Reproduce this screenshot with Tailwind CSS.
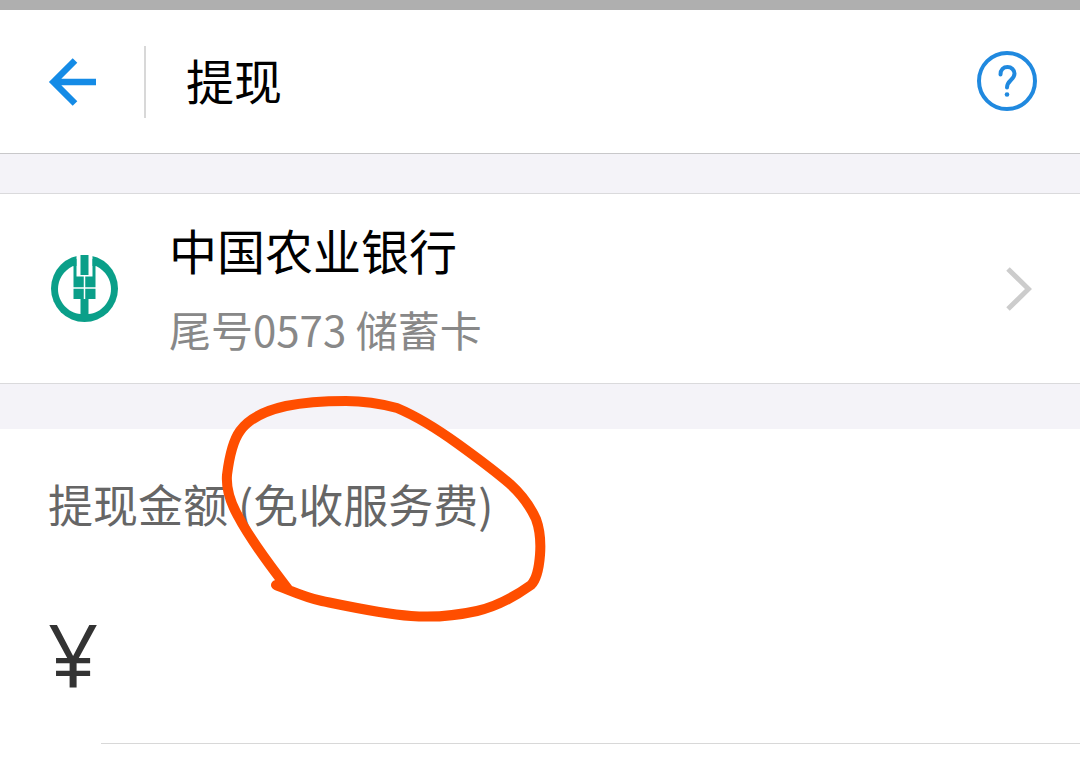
<!DOCTYPE html>
<html lang="zh-CN">
<head>
<meta charset="utf-8">
<meta name="viewport" content="width=device-width, initial-scale=1">
<title>提现</title>
<script src="https://cdn.jsdelivr.net/npm/@tailwindcss/browser@4"></script>
</head>
<body class="min-h-screen bg-white font-['Noto_Sans_CJK_SC',sans-serif] text-black">
<div class="h-[10px] bg-[#afafaf]"></div>
<header class="flex h-36 items-center border-b border-[#c8c8ca] pr-[42px] pl-12">
  <button type="button" aria-label="返回" class="flex">
    <svg class="h-12 w-12" viewBox="0 0 48 48" fill="none" stroke="#148be6" stroke-width="6.500"><path d="M48 24H5M27 2.500L5.500 24L27 45.500"/></svg>
  </button>
  <div class="ml-12 h-[72px] w-0.5 bg-[#d8d8d8]"></div>
  <h1 class="ml-10 flex-1 pb-1.5 text-[48px] leading-[64px]">提现</h1>
  <button type="button" aria-label="帮助" class="flex">
    <svg class="h-[62px] w-[62px]" viewBox="0 0 62 62" fill="none" stroke="#2089df" stroke-width="4" stroke-linecap="round"><circle cx="31" cy="30" r="28"/><path d="M24.500 23.500C24.500 18.500 27.500 16 31.500 16C35.500 16 38.500 19 38.500 22.500C38.500 29 31 29 31 36.500"/><circle cx="31" cy="43.500" r="2.300" fill="#2089df" stroke="none"/></svg>
  </button>
</header>
<main>
  <div class="bg-[#f4f3f8] pt-10">
    <a href="#" class="-mt-px flex h-[191px] items-center border-y border-[#dadadc] bg-white pr-12 pl-[51px]">
      <svg class="h-[67px] w-[67px]" viewBox="0 0 67 67" aria-hidden="true">
        <circle cx="33.500" cy="33.500" r="33.500" fill="#0a9f89"/>
        <path d="M22 11C12 16 7 25 7 34C7 47 17 58 29.500 59H37.500C50 58 60 47 60 34C60 25 55 16 45 11Z" fill="#fff"/>
        <path d="M25.500 -1H41.500V22H25.500Z" fill="#fff"/>
        <path d="M21.500 4H25.500V21.500H41.500V4H45.500L44.500 12V44H37.500V62H29.500V44H22.500V12ZM29.500 0H37.500V20H29.500Z" fill="#0a9f89"/>
        <path d="M33.500 21V44M22 33H45" fill="none" stroke="#fff" stroke-width="1.500"/>
      </svg>
      <span class="ml-[51px] flex flex-1 flex-col gap-3 pb-1">
        <span class="text-[48px] leading-[72px]">中国农业银行</span>
        <span class="text-[42px] leading-[64px] text-[#888]">尾号0573 储蓄卡</span>
      </span>
      <svg class="h-[44px] w-[26px]" viewBox="0 0 26 44" fill="none" stroke="#ccc" stroke-width="5" aria-hidden="true"><path d="M2 2L22.500 22L2 42"/></svg>
    </a>
    <div class="h-[45px]"></div>
  </div>
  <section class="pt-[43px]">
    <label for="amount" class="relative mx-12 block w-fit text-[45px] leading-[64px] text-[#666]">提现金额 (免收服务费)
      <svg class="pointer-events-none absolute -top-20 left-[168px] h-[232px] w-[336px]" viewBox="216 392 336 232" fill="none" stroke="#ff4e00" stroke-width="10" stroke-linecap="round" stroke-linejoin="round" aria-hidden="true"><path d="M288 589C273 569 252 543 238 516C229 500 226 488 227 475C229 459 232 442 240 431C250 417 268 410 286 406C305 402 330 401 346 401C364 401 382 404 397 408C416 416 440 431 458 444C476 457 496 472 510 484C520 493 530 506 536 519C540 530 541 542 540 555C539 568 537 579 531 585C517 595 499 606 477 611C459 615 437 618 411 616C383 614 351 607 322 601C304 597 292 591 276 585L288 589"/></svg>
    </label>
    <div class="mt-[68px] ml-12 flex h-[139px] items-start">
      <span class="font-['Open_Sans',sans-serif] text-[88px] leading-[100px] font-medium text-[#333]">¥</span>
      <input id="amount" type="text" inputmode="decimal" class="ml-1 h-[100px] min-w-0 flex-1 text-[80px] text-[#333] outline-none">
    </div>
    <div class="ml-[101px] h-px bg-[#d8d8d8]"></div>
  </section>
</main>
</body>
</html>
